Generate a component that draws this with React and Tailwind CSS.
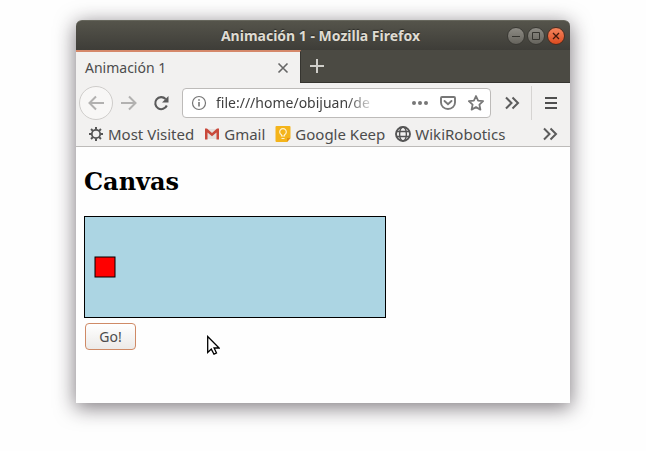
const bookmarks = [
  { label: 'Most Visited', icon: GearIcon },
  { label: 'Gmail', icon: GmailIcon },
  { label: 'Google Keep', icon: KeepIcon },
  { label: 'WikiRobotics', icon: GlobeIcon },
];

function GearIcon() {
  return (
    <svg className="size-4 shrink-0" viewBox="0 0 16 16" fill="none" stroke="#555" aria-hidden="true">
      <circle cx="8" cy="8" r="4.2" strokeWidth="1.8" />
      <path
        d="M8 1v2.500M8 12.500v2.500M1 8h2.500M12.500 8H15M3.050 3.050l1.800 1.800M11.150 11.150l1.800 1.800M3.050 12.950l1.800-1.800M11.150 4.850l1.800-1.800"
        strokeWidth="2"
      />
    </svg>
  );
}

function GmailIcon() {
  return (
    <svg className="size-4 shrink-0" viewBox="0 0 16 16" aria-hidden="true">
      <path d="M2 3h12v10H2z" fill="#e4dfdd" />
      <path d="M1 2.500h2l5 4.500 5-4.500h2v11h-2.500V6.500L8 10.200 3.500 6.500v7H1z" fill="#c9483a" />
    </svg>
  );
}

function KeepIcon() {
  return (
    <svg className="size-4 shrink-0" viewBox="0 0 16 16" fill="none" aria-hidden="true">
      <path d="M1.500 0h13a1 1 0 0 1 1 1v11L12 16H1.500a1 1 0 0 1-1-1V1a1 1 0 0 1 1-1z" fill="#f4b41a" />
      <path d="M15.500 12L12 16v-4z" fill="#e38f12" />
      <path d="M6.500 10V8.800a3.300 3.300 0 1 1 3 0V10zM6.500 12.500h3" stroke="#fdf0cf" strokeWidth="1.200" />
    </svg>
  );
}

function GlobeIcon() {
  return (
    <svg className="size-4 shrink-0" viewBox="0 0 16 16" fill="none" stroke="#555" aria-hidden="true">
      <circle cx="8" cy="8" r="7" strokeWidth="1.900" />
      <ellipse cx="8" cy="8" rx="3.400" ry="7" strokeWidth="1.400" />
      <path d="M1.800 5.500h12.400M1.800 10.500h12.400" strokeWidth="1.400" />
    </svg>
  );
}

function ChevronsIcon() {
  return (
    <svg className="size-4" viewBox="0 0 16 16" fill="none" stroke="#5c5c5c" strokeWidth="2" aria-hidden="true">
      <path d="M2 2.500L7.500 8 2 13.500M8.500 2.500L14 8l-5.500 5.500" />
    </svg>
  );
}

function TitleBar() {
  const control =
    'flex size-[18px] items-center justify-center rounded-full border border-[#3a3934] bg-linear-to-b from-[#8d8b84] to-[#66645d]';
  return (
    <header className="grid h-[30px] grid-cols-[1fr_auto_1fr] items-center rounded-t-md border-t border-[#66665c] bg-linear-to-b from-[#55544b] to-[#3e3d38] pr-[5px]">
      <h1 className="col-start-2 text-sm font-bold text-[#dfdbd2] [text-shadow:0_-1px_1px_#2b2b27]">
        Animación 1 - Mozilla Firefox
      </h1>
      <div className="flex justify-end gap-0.5">
        <button type="button" aria-label="Minimize" className={control}>
          <svg className="size-3 shrink-0" viewBox="0 0 12 12" stroke="#35342f" aria-hidden="true">
            <path d="M2 6.500h8" />
          </svg>
        </button>
        <button type="button" aria-label="Maximize" className={control}>
          <svg className="size-3 shrink-0" viewBox="0 0 12 12" fill="none" stroke="#35342f" aria-hidden="true">
            <path d="M2.500 2.500h7v7h-7z" />
          </svg>
        </button>
        <button
          type="button"
          aria-label="Close window"
          className="flex size-[18px] items-center justify-center rounded-full border border-[#4b2c20] bg-linear-to-b from-[#f4845c] to-[#dd4a1c]"
        >
          <svg className="size-3 shrink-0" viewBox="0 0 12 12" stroke="#42180c" strokeWidth="1.300" aria-hidden="true">
            <path d="M3 3l6 6M9 3L3 9" />
          </svg>
        </button>
      </div>
    </header>
  );
}

function TabStrip() {
  return (
    <div className="flex h-[33px] border-b border-[#35342f] bg-[#4b4a43]">
      <div className="-mb-px flex w-[225px] items-center justify-between border-t-2 border-r border-t-[#d5886a] border-r-[#35342f] bg-[#f2f1f0] pr-[11px] pl-[9px]">
        <span className="text-sm text-[#4c4c4c]">Animación 1</span>
        <button type="button" aria-label="Close tab">
          <svg className="size-3" viewBox="0 0 12 12" stroke="#666" strokeWidth="1.600" aria-hidden="true">
            <path d="M1.500 1.500l9 9M10.500 1.500l-9 9" />
          </svg>
        </button>
      </div>
      <button type="button" aria-label="New tab" className="px-2">
        <svg className="size-4" viewBox="0 0 16 16" stroke="#d0cfca" strokeWidth="2" aria-hidden="true">
          <path d="M8 1v14M1 8h14" />
        </svg>
      </button>
    </div>
  );
}

function NavBar() {
  return (
    <nav className="flex h-10 items-center pr-[11px] pl-[3px]">
      <button
        type="button"
        aria-label="Back"
        className="flex size-[34px] shrink-0 items-center justify-center rounded-full border border-[#cfcdcb] bg-[#f8f7f6]"
      >
        <svg className="size-4" viewBox="0 0 16 16" fill="none" stroke="#b2b1b0" strokeWidth="2" aria-hidden="true">
          <path d="M16 8H1.500M8 1.500L1.500 8 8 14.500" />
        </svg>
      </button>
      <button type="button" aria-label="Forward" className="p-2">
        <svg className="size-4" viewBox="0 0 16 16" fill="none" stroke="#b2b1b0" strokeWidth="2" aria-hidden="true">
          <path d="M0 8h14.500M8 1.500L14.500 8 8 14.500" />
        </svg>
      </button>
      <button type="button" aria-label="Reload" className="p-2">
        <svg className="size-4" viewBox="0 0 16 16" fill="none" aria-hidden="true">
          <path d="M13.800 10.500A6 6 0 1 1 12.600 4" stroke="#5a5a5a" strokeWidth="2.100" />
          <path d="M15.500 1v6.500H9z" fill="#5a5a5a" />
        </svg>
      </button>
      <div className="ml-[5px] flex h-[30px] min-w-0 flex-1 items-center rounded-[4px] border border-[#bdbbb9] bg-white pr-1.5 pl-2">
        <svg className="size-4 shrink-0" viewBox="0 0 16 16" fill="none" stroke="#757575" aria-hidden="true">
          <circle cx="8" cy="8" r="6.500" strokeWidth="1.200" />
          <path d="M8 7v4.500M8 4.200v1.600" strokeWidth="1.600" />
        </svg>
        <input
          type="text"
          aria-label="Address"
          defaultValue="file:///home/obijuan/de"
          className="ml-[9px] w-40 min-w-0 bg-transparent text-sm text-[#3f3f3f] outline-none [mask-image:linear-gradient(to_right,black_82%,transparent)]"
        />
        <div className="ml-auto flex shrink-0 gap-3">
          <button type="button" aria-label="Page actions">
            <svg className="size-4" viewBox="0 0 16 16" fill="#777" aria-hidden="true">
              <circle cx="2" cy="8" r="2" />
              <circle cx="8" cy="8" r="2" />
              <circle cx="14" cy="8" r="2" />
            </svg>
          </button>
          <button type="button" aria-label="Save to Pocket">
            <svg className="size-4" viewBox="0 0 16 16" fill="none" stroke="#777" strokeWidth="1.900" aria-hidden="true">
              <path d="M2 2h12a1 1 0 0 1 1 1v4.500a7 6.500 0 0 1-14 0V3a1 1 0 0 1 1-1z" />
              <path d="M4.500 6L8 9.300 11.500 6" strokeLinecap="round" />
            </svg>
          </button>
          <button type="button" aria-label="Bookmark this page">
            <svg className="size-4" viewBox="0 0 16 16" fill="none" stroke="#777" strokeWidth="1.800" strokeLinejoin="round" aria-hidden="true">
              <path d="M8 1l2.100 4.600 5 .6-3.700 3.400 1 5L8 12.100l-4.400 2.500 1-5L.9 6.200l5-.6z" />
            </svg>
          </button>
        </div>
      </div>
      <button type="button" aria-label="More tools" className="ml-[13px]">
        <ChevronsIcon />
      </button>
      <div className="ml-[11px] h-[34px] w-px bg-[#d6d4d2]" />
      <button type="button" aria-label="Open menu" className="ml-[11px]">
        <svg className="size-4" viewBox="0 0 16 16" stroke="#4f4f4f" strokeWidth="2" aria-hidden="true">
          <path d="M2 3h12M2 8h12M2 13h12" />
        </svg>
      </button>
    </nav>
  );
}

function BookmarksBar() {
  return (
    <div className="flex h-6 items-center border-b border-[#bdbbb9] px-3 pb-px">
      <ul className="flex gap-2.5">
        {bookmarks.map(({ label, icon: Icon }) => (
          <li key={label}>
            <a href="#" className="flex items-center gap-1 text-[15px] leading-5 whitespace-nowrap text-[#4c4c4c]">
              <Icon />
              {label}
            </a>
          </li>
        ))}
      </ul>
      <button type="button" aria-label="More bookmarks" className="ml-auto">
        <ChevronsIcon />
      </button>
    </div>
  );
}

function Page() {
  return (
    <main className="relative bg-[#fefefe] px-2 pt-[19px] pb-[53px]">
      <h2 className="font-['DejaVu_Serif',serif] text-2xl leading-8 font-bold text-black">Canvas</h2>
      <svg
        className="mt-[18px] box-content block h-[100px] w-[300px] border border-black bg-[#acd5e3]"
        viewBox="0 0 300 100"
        role="img"
        aria-label="Red square on a light blue canvas"
      >
        <rect x="10" y="40" width="20" height="20" fill="red" stroke="black" />
      </svg>
      <button
        type="button"
        className="mt-[5px] ml-px h-[27px] w-[51px] rounded-[4px] border border-[#cf8a66] bg-linear-to-b from-white to-[#eceae8] text-sm text-[#4c4c4c]"
      >
        Go!
      </button>
      <svg className="absolute top-[188px] left-[131px] h-5 w-[13px]" viewBox="0 0 13 20" aria-hidden="true">
        <path
          d="M.7 1.500v16l3.600-3.400 2.700 5.100 2.500-1.200-2.400-5h5z"
          fill="white"
          stroke="black"
          strokeWidth="1.300"
        />
      </svg>
    </main>
  );
}

export default function App() {
  return (
    <div className="min-h-screen bg-[#fefefe] px-19 pt-5 pb-12 font-['Noto_Sans','Open_Sans',sans-serif]">
      <div className="rounded-t-md bg-[#f2f1f0] shadow-[0_4px_20px_1px_rgba(30,20,30,0.55)]">
        <TitleBar />
        <TabStrip />
        <NavBar />
        <BookmarksBar />
        <Page />
      </div>
    </div>
  );
}
